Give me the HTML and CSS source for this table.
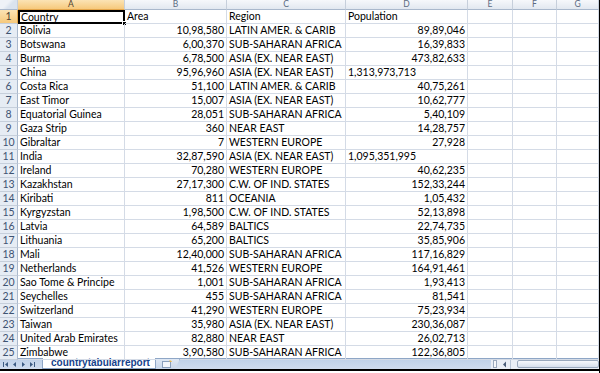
FILE: index.html
```html
<!DOCTYPE html>
<html lang="en">
<head>
  <meta charset="UTF-8">
  <title>countrytabularreport</title>
  <link rel="stylesheet" href="styles.css">
</head>
<body>
  <div class="sheet">
    <div class="row head">
      <span class="corner"></span>
      <span class="col sel">A</span>
      <span class="col">B</span>
      <span class="col">C</span>
      <span class="col">D</span>
      <span class="col">E</span>
      <span class="col">F</span>
      <span class="col">G</span>
    </div>

    <div class="row"><span class="rh sel">1</span><span class="active">Country<i class="handle"></i></span><span>Area</span><span>Region</span><span>Population</span><span></span><span></span><span></span></div>
    <div class="row"><span class="rh">2</span><span>Bolivia</span><span class="num">10,98,580</span><span>LATIN AMER. &amp; CARIB</span><span class="num">89,89,046</span><span></span><span></span><span></span></div>
    <div class="row"><span class="rh">3</span><span>Botswana</span><span class="num">6,00,370</span><span>SUB-SAHARAN AFRICA</span><span class="num">16,39,833</span><span></span><span></span><span></span></div>
    <div class="row"><span class="rh">4</span><span>Burma</span><span class="num">6,78,500</span><span>ASIA (EX. NEAR EAST)</span><span class="num">473,82,633</span><span></span><span></span><span></span></div>
    <div class="row"><span class="rh">5</span><span>China</span><span class="num">95,96,960</span><span>ASIA (EX. NEAR EAST)</span><span>1,313,973,713</span><span></span><span></span><span></span></div>
    <div class="row"><span class="rh">6</span><span>Costa Rica</span><span class="num">51,100</span><span>LATIN AMER. &amp; CARIB</span><span class="num">40,75,261</span><span></span><span></span><span></span></div>
    <div class="row"><span class="rh">7</span><span>East Timor</span><span class="num">15,007</span><span>ASIA (EX. NEAR EAST)</span><span class="num">10,62,777</span><span></span><span></span><span></span></div>
    <div class="row"><span class="rh">8</span><span>Equatorial Guinea</span><span class="num">28,051</span><span>SUB-SAHARAN AFRICA</span><span class="num">5,40,109</span><span></span><span></span><span></span></div>
    <div class="row"><span class="rh">9</span><span>Gaza Strip</span><span class="num">360</span><span>NEAR EAST</span><span class="num">14,28,757</span><span></span><span></span><span></span></div>
    <div class="row"><span class="rh">10</span><span>Gibraltar</span><span class="num">7</span><span>WESTERN EUROPE</span><span class="num">27,928</span><span></span><span></span><span></span></div>
    <div class="row"><span class="rh">11</span><span>India</span><span class="num">32,87,590</span><span>ASIA (EX. NEAR EAST)</span><span>1,095,351,995</span><span></span><span></span><span></span></div>
    <div class="row"><span class="rh">12</span><span>Ireland</span><span class="num">70,280</span><span>WESTERN EUROPE</span><span class="num">40,62,235</span><span></span><span></span><span></span></div>
    <div class="row"><span class="rh">13</span><span>Kazakhstan</span><span class="num">27,17,300</span><span>C.W. OF IND. STATES</span><span class="num">152,33,244</span><span></span><span></span><span></span></div>
    <div class="row"><span class="rh">14</span><span>Kiribati</span><span class="num">811</span><span>OCEANIA</span><span class="num">1,05,432</span><span></span><span></span><span></span></div>
    <div class="row"><span class="rh">15</span><span>Kyrgyzstan</span><span class="num">1,98,500</span><span>C.W. OF IND. STATES</span><span class="num">52,13,898</span><span></span><span></span><span></span></div>
    <div class="row"><span class="rh">16</span><span>Latvia</span><span class="num">64,589</span><span>BALTICS</span><span class="num">22,74,735</span><span></span><span></span><span></span></div>
    <div class="row"><span class="rh">17</span><span>Lithuania</span><span class="num">65,200</span><span>BALTICS</span><span class="num">35,85,906</span><span></span><span></span><span></span></div>
    <div class="row"><span class="rh">18</span><span>Mali</span><span class="num">12,40,000</span><span>SUB-SAHARAN AFRICA</span><span class="num">117,16,829</span><span></span><span></span><span></span></div>
    <div class="row"><span class="rh">19</span><span>Netherlands</span><span class="num">41,526</span><span>WESTERN EUROPE</span><span class="num">164,91,461</span><span></span><span></span><span></span></div>
    <div class="row"><span class="rh">20</span><span>Sao Tome &amp; Principe</span><span class="num">1,001</span><span>SUB-SAHARAN AFRICA</span><span class="num">1,93,413</span><span></span><span></span><span></span></div>
    <div class="row"><span class="rh">21</span><span>Seychelles</span><span class="num">455</span><span>SUB-SAHARAN AFRICA</span><span class="num">81,541</span><span></span><span></span><span></span></div>
    <div class="row"><span class="rh">22</span><span>Switzerland</span><span class="num">41,290</span><span>WESTERN EUROPE</span><span class="num">75,23,934</span><span></span><span></span><span></span></div>
    <div class="row"><span class="rh">23</span><span>Taiwan</span><span class="num">35,980</span><span>ASIA (EX. NEAR EAST)</span><span class="num">230,36,087</span><span></span><span></span><span></span></div>
    <div class="row"><span class="rh">24</span><span>United Arab Emirates</span><span class="num">82,880</span><span>NEAR EAST</span><span class="num">26,02,713</span><span></span><span></span><span></span></div>
    <div class="row"><span class="rh">25</span><span>Zimbabwe</span><span class="num">3,90,580</span><span>SUB-SAHARAN AFRICA</span><span class="num">122,36,805</span><span></span><span></span><span></span></div>

    <div class="tabbar">
      <div class="nav">
        <svg width="40" height="11" viewBox="0 0 40 11">
          <rect x="3" y="3" width="1" height="5" fill="#3b5a82"/>
          <path d="M8 3 L5 5.5 L8 8 Z" fill="#3b5a82"/>
          <path d="M16 3 L13 5.5 L16 8 Z" fill="#3b5a82"/>
          <path d="M22 3 L25 5.5 L22 8 Z" fill="#3b5a82"/>
          <path d="M30 3 L33 5.5 L30 8 Z" fill="#3b5a82"/>
          <rect x="34" y="3" width="1" height="5" fill="#3b5a82"/>
        </svg>
      </div>
      <div class="tab">countrytabularreport</div>
      <div class="newtab">
        <svg width="12" height="9" viewBox="0 0 12 9">
          <rect x="1.5" y="1.5" width="8" height="6" fill="#f3f6fb" stroke="#8aa0bd"/>
          <path d="M8 0.5 L10 0.5 L11 2 L9 2 Z" fill="#e8b84a"/>
        </svg>
      </div>
      <div class="fill"></div>
      <div class="hscroll">
        <span class="split"></span>
        <span class="arrow">
          <svg width="5" height="7" viewBox="0 0 5 7"><path d="M4 0.5 L1 3.5 L4 6.5 Z" fill="#4a5d78"/></svg>
        </span>
        <span class="thumb"></span>
      </div>
    </div>
  </div>
</body>
</html>
```

FILE: styles.css
```css
/* Reset margin and padding */
* {
  margin: 0;
  padding: 0;
  box-sizing: border-box;
}

body {
  width: 600px;
  height: 373px;
  overflow: hidden;
  background-color: #fff;
  font-family: 'Lato', 'Liberation Sans', sans-serif;
  font-size: 10.5px;
  color: #000;
}

.sheet {
  display: flex;
  flex-direction: column;
  width: 600px;
  height: 373px;
  border-right: 1px solid #000;
}

/* Each row shares the same column widths */
.row {
  display: grid;
  grid-template-columns: 18px 107px 102px 119px 122px 45px 44px 42px;
  height: 14px;
}

.row > span {
  position: relative;
  border-right: 1px solid #d4dbe6;
  border-bottom: 1px solid #d4dbe6;
  padding: 0 2px;
  line-height: 13px;
  white-space: nowrap;
  overflow: hidden;
}

.row > span.num {
  text-align: right;
}

/* Column headers */
.row.head {
  height: 10px;
}

.row.head > span {
  background: linear-gradient(#f6f8fb, #e2e8f0);
  border-right: 1px solid #c6cfdb;
  border-bottom: 1px solid #a9b8cc;
  text-align: center;
  font-size: 8.5px;
  line-height: 9px;
  color: #5b6b82;
}

.row.head > span.sel {
  background: linear-gradient(#fbe3b4, #f6c97c);
  border-bottom-color: #e3a54a;
  color: #4c4030;
}

.row.head > span.corner {
  background: linear-gradient(135deg, #eef2f7 40%, #dae3ee 60%);
}

/* Row headers */
.row > span.rh {
  background: #e6ecf4;
  border-right: 1px solid #a9b8cc;
  border-bottom: 1px solid #c6cfdb;
  color: #3e5372;
  text-align: center;
  padding: 0;
}

.row > span.rh.sel {
  background: linear-gradient(#fbe3b4, #f6c97c);
  border-right-color: #e3a54a;
  color: #4c4030;
}

/* Active cell A1 */
.row > span.active {
  overflow: visible;
  border: 2px solid #000;
  line-height: 10px;
  padding: 0 1px;
}

.handle {
  position: absolute;
  right: -4px;
  bottom: -4px;
  width: 5px;
  height: 5px;
  background: #000;
  border: 1px solid #fff;
}

/* Sheet tabs and scroll bar */
.tabbar {
  display: flex;
  height: 13px;
  margin-top: -2px;
  background: linear-gradient(#bfd1e8, #cfdcee);
  border-top: 1px solid #8ea6c6;
  border-bottom: 2px solid #000;
}

.nav {
  width: 42px;
  display: flex;
  align-items: center;
}

.tab {
  background: #fff;
  color: #15428b;
  font-family: 'Liberation Sans', Arial, sans-serif;
  font-weight: bold;
  font-size: 10px;
  line-height: 10px;
  padding: 0 5px 0 8px;
  margin-top: -1px;
  border: 1px solid #8ea6c6;
  border-top: none;
}

.newtab {
  width: 24px;
  display: flex;
  align-items: center;
  justify-content: center;
  background: linear-gradient(#dfe8f4, #c9d7ea);
  border-right: 1px solid #8ea6c6;
  clip-path: polygon(0 0, 100% 0, 80% 100%, 0 100%);
}

.fill {
  flex: 1;
}

.hscroll {
  width: 108px;
  display: flex;
  background: #e9eef5;
}

.split {
  width: 4px;
  margin: 1px 2px;
  background: #f5f7fa;
  border: 1px solid #9aa9bd;
}

.arrow {
  width: 12px;
  display: flex;
  align-items: center;
  justify-content: center;
  border-right: 1px solid #b8c5d6;
}

.thumb {
  flex: 1;
  margin: 1px 0 1px 6px;
  background: linear-gradient(#f6f8fb, #d7e0ec);
  border: 1px solid #9aa9bd;
  border-radius: 2px;
}
```
